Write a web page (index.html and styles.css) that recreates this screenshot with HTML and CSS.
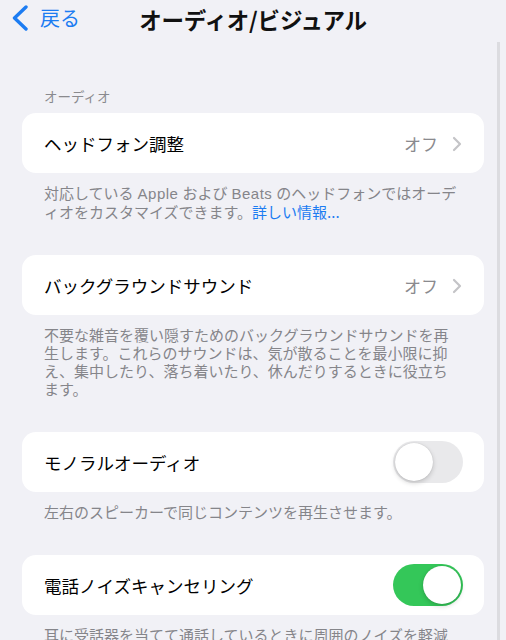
FILE: index.html
```html
<!DOCTYPE html>
<html lang="ja">
<head>
    <meta charset="UTF-8">
    <meta name="viewport" content="width=device-width, initial-scale=1.0">
    <title>オーディオ/ビジュアル</title>
    <link rel="stylesheet" href="styles.css">
</head>
<body>
    <div class="nav">
        <a class="back" href="#">
            <svg class="back-icon" width="18" height="26" viewBox="0 0 18 26">
                <path d="M15 2 L3.5 13 L15 24" fill="none" stroke="#1c7cf2" stroke-width="3.4" stroke-linecap="round" stroke-linejoin="round"/>
            </svg>
            <span>戻る</span>
        </a>
        <h1>オーディオ/ビジュアル</h1>
    </div>

    <div class="content">
        <div class="section-title">オーディオ</div>

        <div class="group">
            <div class="card">
                <span class="label">ヘッドフォン調整</span>
                <span class="value">オフ
                    <svg class="chev" width="10" height="16" viewBox="0 0 10 16"><path d="M2 2 L8 8 L2 14" fill="none" stroke="#c4c4c7" stroke-width="2.2" stroke-linecap="round" stroke-linejoin="round"/></svg>
                </span>
            </div>
            <p class="footer">対応している<span class="en">Apple</span>および<span class="en">Beats</span>のヘッドフォンではオーディオをカスタマイズできます。<a href="#">詳しい情報...</a></p>
        </div>

        <div class="group">
            <div class="card">
                <span class="label">バックグラウンドサウンド</span>
                <span class="value">オフ
                    <svg class="chev" width="10" height="16" viewBox="0 0 10 16"><path d="M2 2 L8 8 L2 14" fill="none" stroke="#c4c4c7" stroke-width="2.2" stroke-linecap="round" stroke-linejoin="round"/></svg>
                </span>
            </div>
            <p class="footer">不要な雑音を覆い隠すためのバックグラウンドサウンドを再生します。これらのサウンドは、気が散ることを最小限に抑え、集中したり、落ち着いたり、休んだりするときに役立ちます。</p>
        </div>

        <div class="group">
            <div class="card">
                <span class="label">モノラルオーディオ</span>
                <span class="toggle"><span class="knob"></span></span>
            </div>
            <p class="footer">左右のスピーカーで同じコンテンツを再生させます。</p>
        </div>

        <div class="group">
            <div class="card">
                <span class="label">電話ノイズキャンセリング</span>
                <span class="toggle on"><span class="knob"></span></span>
            </div>
            <p class="footer">耳に受話器を当てて通話しているときに周囲のノイズを軽減します。</p>
        </div>
    </div>

    <div class="scrollbar"></div>
</body>
</html>
```

FILE: styles.css
```css
body {
    font-family: "Noto Sans CJK JP", "Noto Sans", sans-serif;
    background-color: #f1f1f6;
    margin: 0;
    padding: 0;
    width: 506px;
    height: 640px;
    overflow: hidden;
    position: relative;
}
.nav {
    position: relative;
    height: 38px;
    display: flex;
    align-items: center;
    justify-content: center;
}
.back {
    position: absolute;
    left: 11px;
    top: 5px;
    display: flex;
    align-items: center;
    gap: 11px;
    color: #1c7cf2;
    text-decoration: none;
    font-size: 20px;
    line-height: 26px;
}
h1 {
    margin: 0;
    font-size: 22.5px;
    font-weight: bold;
    color: #111;
    letter-spacing: -0.2px;
    line-height: 36px;
}
.content {
    padding: 0 22px;
}
.section-title {
    margin-top: 48px;
    padding-left: 22px;
    font-size: 13.5px;
    line-height: 20px;
    color: #8a8a8e;
}
.group {
    margin-bottom: 34px;
}
.section-title + .group {
    margin-top: 7px;
}
.card {
    background-color: #fff;
    border-radius: 14px;
    height: 60px;
    display: flex;
    align-items: center;
    justify-content: space-between;
    padding: 0 22px;
}
.label {
    font-size: 17.5px;
    color: #000;
}
.value {
    display: flex;
    align-items: center;
    gap: 14px;
    font-size: 17px;
    color: #8a8a8e;
}
.chev {
    margin-top: 1px;
}
.toggle {
    width: 70px;
    height: 42px;
    border-radius: 21px;
    background-color: #e9e9eb;
    position: relative;
    margin-right: -1px;
}
.toggle .knob {
    position: absolute;
    top: 2px;
    left: 2px;
    width: 38px;
    height: 38px;
    border-radius: 50%;
    background-color: #fff;
    box-shadow: 0 2px 5px rgba(0, 0, 0, 0.18), 0 0 1px rgba(0, 0, 0, 0.2);
}
.toggle.on {
    background-color: #34c759;
}
.toggle.on .knob {
    left: 30px;
}
.footer {
    margin: 0;
    padding: 11px 22px 0;
    font-size: 15px;
    line-height: 18px;
    color: #85858a;
    line-break: loose;
}
.footer .en {
    font-family: "Liberation Sans", Arial, sans-serif;
    letter-spacing: 0.5px;
    margin: 0 4px;
}
.footer a {
    color: #1c7cf2;
    text-decoration: none;
}
.scrollbar {
    position: absolute;
    left: 497px;
    top: 42px;
    width: 3px;
    height: 600px;
    background-color: #dcdce0;
}
```
